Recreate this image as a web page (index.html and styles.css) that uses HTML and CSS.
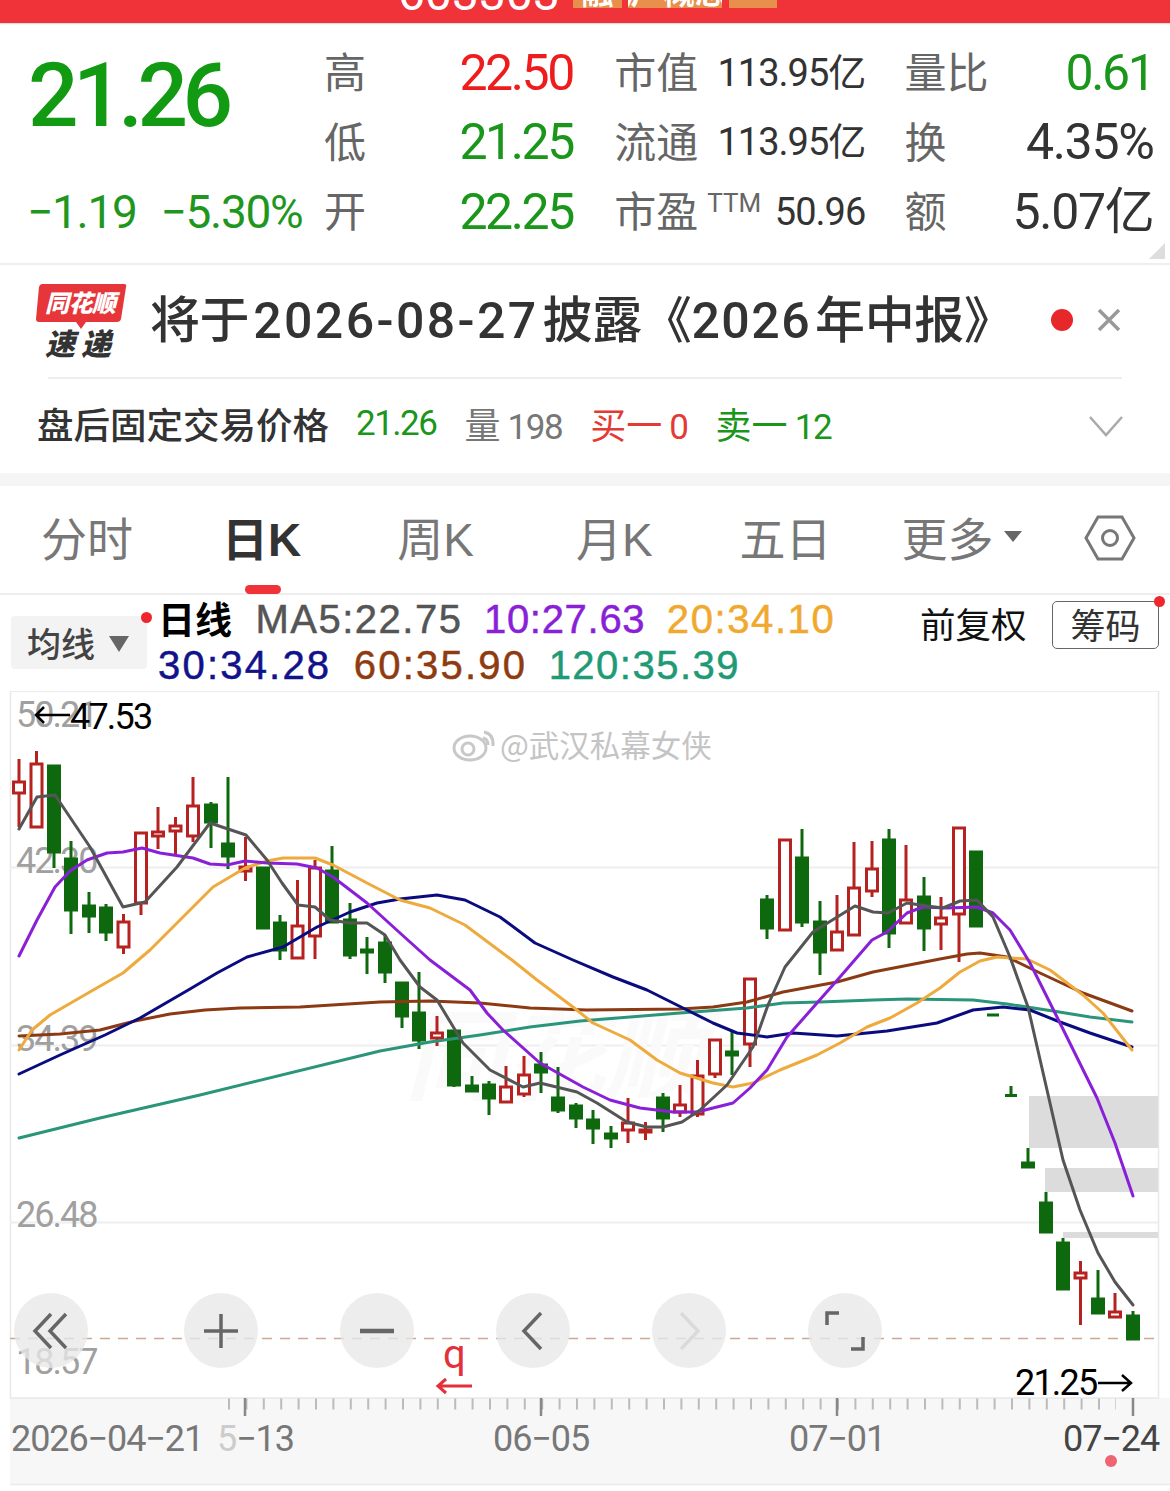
FILE: index.html
```html
<!DOCTYPE html>
<html lang="zh-CN">
<head>
<meta charset="utf-8">
<title>K线</title>
<link rel="stylesheet" href="styles.css">
</head>
<body>
<div class="page">
  <header class="topbar">
    <span class="code">603303</span>
    <span class="tag t1"><span>融</span></span>
    <span class="tag t2"><span>沪 概念</span></span>
    <span class="tag t3"></span>
  </header>

  <section class="quote">
    <div class="now">
      <div class="price din">21.26</div>
      <div class="change din"><span>−1.19</span><span>−5.30%</span></div>
    </div>
    <div class="stats">
      <div class="cell"><span class="lab one">高</span><span class="val big din red">22.50</span></div>
      <div class="cell"><span class="lab">市值</span><span class="val mid din">113.95亿</span></div>
      <div class="cell"><span class="lab">量比</span><span class="val big din green">0.61</span></div>
      <div class="cell"><span class="lab one">低</span><span class="val big din green">21.25</span></div>
      <div class="cell"><span class="lab">流通</span><span class="val mid din">113.95亿</span></div>
      <div class="cell"><span class="lab">换</span><span class="val big din dark">4.35%</span></div>
      <div class="cell"><span class="lab one">开</span><span class="val big din green">22.25</span></div>
      <div class="cell"><span class="lab">市盈<sup class="ttm">TTM</sup></span><span class="val mid din">50.96</span></div>
      <div class="cell"><span class="lab">额</span><span class="val big din dark">5.07亿</span></div>
    </div>
    <i class="corner"></i>
  </section>

  <section class="notice">
    <svg class="logo" width="92" height="78" viewBox="0 0 92 78">
      <path class="logo-bg" d="M6 1H88Q91 1 90 4L85 36Q84 39 81 39H50L45 46L40 39H3Q0 39 0 36L3 4Q4 1 6 1Z"/>
      <text class="logo-a" x="9" y="29">同花顺</text>
      <text class="logo-b" x="9" y="72">速递</text>
    </svg>
    <div class="notice-text">将于 <span class="num">2026-08-27</span> 披露《<span class="num short">2026</span> 年中报》</div>
    <i class="dot"></i>
    <svg class="close" width="26" height="26" viewBox="0 0 26 26"><path d="M3 3L23 23M23 3L3 23"/></svg>
  </section>

  <section class="after">
    <span class="after-title">盘后固定交易价格</span>
    <span class="din af green">21.26</span>
    <span class="din af gray"><b>量</b> 198</span>
    <span class="din af redsoft"><b>买一</b> 0</span>
    <span class="din af green"><b>卖一</b> 12</span>
    <svg class="chev" width="36" height="24" viewBox="0 0 36 24"><path d="M2 3L18 21L34 3"/></svg>
  </section>

  <div class="band"></div>

  <nav class="tabs">
    <span class="tab t-a">分时</span>
    <span class="tab t-b active">日K</span>
    <span class="tab t-c">周K</span>
    <span class="tab t-d">月K</span>
    <span class="tab t-e">五日</span>
    <span class="tab t-f">更多<i class="caret"></i></span>
    <svg class="hex" width="52" height="46" viewBox="0 0 52 46"><path d="M14 2H38L50 23L38 44H14L2 23Z"/><circle cx="26" cy="23" r="7.5"/></svg>
  </nav>

  <section class="legend">
    <div class="ma-btn">均线<i class="caret big-caret"></i><i class="reddot d1"></i></div>
    <div class="ma-lines">
      <div class="ma-row"><b class="ma-title">日线</b><span class="c5">MA5:22.75</span><span class="c10">10:27.63</span><span class="c20">20:34.10</span></div>
      <div class="ma-row"><span class="c30">30:34.28</span><span class="c60">60:35.90</span><span class="c120">120:35.39</span></div>
    </div>
    <div class="fq">前复权</div>
    <div class="chip">筹码<i class="reddot d2"></i></div>
  </section>

  <section class="chart">
    <svg class="kline" width="1170" height="800" viewBox="0 691 1170 800">
      <rect class="axisbg" x="10" y="1398" width="1160" height="86"/>
      <rect class="frame" x="10.5" y="691" width="1148" height="707"/>
      <path class="grid" d="M10 867.5H1158M10 1045.5H1158M10 1222.5H1158"/>
      <text class="wm" x="405" y="1092">同花顺</text>
      <rect class="gap" x="1029" y="1096" width="129" height="52"/>
      <rect class="gap" x="1045" y="1168" width="113" height="24"/>
      <rect class="gap" x="1063" y="1232" width="95" height="6"/>
      <path class="minor" d="M228 1404H1116"/>
      <path class="major" d="M245 1398V1416M541 1398V1416M837 1398V1416M1133 1398V1416"/>
      <path class="now-line" d="M10 1338.5H1158"/>
      <text class="yl" x="16" y="727">50.21</text>
      <text class="yl" x="16" y="873">42.30</text>
      <text class="yl" x="16" y="1051">34.39</text>
      <text class="yl" x="16" y="1227">26.48</text>
      <text class="yl" x="16" y="1374">18.57</text>

      <path class="up" d="M19 759V782M19 793V827M13.5 782h11V793h-11zM36.5 751V764M31 764h11V827h-11zM141 903V915M135.500 833h11V903h-11zM158 807V832M158 836V849M152.500 832h11V836h-11zM175.500 817V826M175.500 831V854M170 826h11V831h-11zM193 777V806M193 836V842M187.500 806h11V836h-11zM245.500 837V867M245.500 871V881M240 867h11V871h-11zM123.500 914V922M123.500 947V954M118 922h11V947h-11zM297.500 880V926M292 926h11V958h-11zM315 860V868M315 936V959M309.500 868h11V936h-11zM437 1016V1033M437 1038V1046M431.500 1033h11V1038h-11zM506 1066V1087M500.500 1087h11V1102h-11zM524 1056V1075M524 1094V1097M518.500 1075h11V1094h-11zM628 1098V1123M628 1130V1143M622.500 1123h11V1130h-11zM645.500 1122V1130M645.500 1132V1140M640 1130h11V1132h-11zM680 1085V1105M680 1112V1117M674.500 1105h11V1112h-11zM697.500 1060V1076M697.500 1114V1117M692 1076h11V1114h-11zM715 1074V1078M709.500 1040h11V1074h-11zM750 1044V1067M744.500 979h11V1044h-11zM779.500 840h11V930h-11zM837 895V932M831.500 932h11V950h-11zM854 842V888M848.500 888h11V935h-11zM872 841V869M872 891V897M866.500 869h11V891h-11zM906 845V900M900.500 900h11V923h-11zM941 897V918M941 924V950M935.500 918h11V924h-11zM959 914V962M953.500 828h11V914h-11zM1080.500 1261V1273M1080.500 1278V1325M1075 1273h11V1278h-11zM1115 1293V1312M1109.500 1312h11V1317h-11z"/>
      <path class="dn" d="M54 765V868M48.500 766h11V852h-11zM71 841V934M65.500 859h11V910h-11zM89 892V933M83.500 906h11V916h-11zM106 904V941M100.500 908h11V932h-11zM211 802V848M205.500 805h11V822h-11zM228 777V869M222.500 844h11V856h-11zM263 868V928M257.500 868h11V928h-11zM280 915V960M274.500 923h11V950h-11zM332 846V922M326.500 871h11V922h-11zM350 903V959M344.500 920h11V955h-11zM367 937V974M361.500 950h11V952h-11zM385 935V983M379.500 943h11V972h-11zM402 983V1028M396.500 983h11V1016h-11zM419 972V1049M413.500 1013h11V1040h-11zM454 1031V1087M448.500 1031h11V1085h-11zM472 1076V1091M466.500 1086h11V1091h-11zM489 1081V1115M483.500 1085h11V1098h-11zM541 1052V1093M535.500 1065h11V1072h-11zM558 1067V1113M552.500 1098h11V1110h-11zM576 1103V1128M570.500 1106h11V1118h-11zM593 1110V1144M587.500 1120h11V1128h-11zM611 1126V1148M605.500 1134h11V1138h-11zM663 1093V1132M657.500 1098h11V1118h-11zM732 1032V1075M726.500 1052h11V1055h-11zM767 895V939M761.500 900h11V928h-11zM802 829V927M796.500 858h11V922h-11zM820 901V975M814.500 922h11V952h-11zM889 829V948M883.500 840h11V933h-11zM924 877V951M918.500 897h11V928h-11zM976 852V926M970.500 852h11V926h-11zM987 1015h12M1011 1086V1096M1005 1095.500h12M1028 1148V1167M1022.500 1163h11V1167h-11zM1046 1192V1232M1040.500 1203h11V1232h-11zM1063 1238V1289M1057.500 1243h11V1289h-11zM1098 1270V1313M1092.500 1299h11V1313h-11zM1133 1311V1339M1127.500 1316h11V1339h-11z"/>

      <polyline class="ma m120" points="19,1138 100,1118 200,1095 380,1051 430,1042 480,1035 530,1027 580,1021 680,1013 747,1008 783,1003 820,1002 873,1000 907,999 973,1000 1007,1004 1053,1011 1090,1017 1132,1022"/>
      <polyline class="ma m60" points="19,1036 60,1034 100,1030 135,1021 170,1014 205,1010 240,1008 300,1007 380,1002 430,1001 480,1003 530,1008 587,1010 680,1009 713,1007 747,1002 783,992 837,982 873,972 940,959 967,954 980,953 1007,957 1040,973 1083,993 1132,1011"/>
      <polyline class="ma m30" points="19,1074 60,1055 105,1035 140,1018 190,989 217,973 247,957 283,947 317,927 350,912 377,903 400,899 437,895 465,900 500,917 535,943 573,960 613,977 647,990 687,1010 713,1023 737,1033 767,1037 793,1033 837,1036 887,1031 937,1023 973,1010 1003,1007 1030,1010 1060,1022 1090,1033 1132,1047"/>
      <polyline class="ma m20" points="19,1050 32,1030 50,1015 95,989 123,973 150,950 187,913 213,887 245,868 267,861 283,858 315,858 333,865 367,883 400,900 430,908 465,925 512,960 537,980 573,1007 593,1023 630,1040 657,1060 680,1073 713,1083 733,1087 753,1083 780,1070 817,1055 840,1043 867,1027 890,1018 917,1003 940,988 960,972 980,961 997,957 1027,959 1050,970 1083,995 1103,1013 1132,1050"/>
      <polyline class="ma m10" points="19,956 37,920 55,887 70,871 87,860 107,853 123,852 142,848 160,853 193,858 210,864 227,865 245,861 267,863 297,864 317,868 333,877 367,903 400,933 430,960 470,990 487,1013 503,1030 540,1063 583,1087 610,1100 640,1108 673,1112 697,1112 733,1103 750,1088 767,1070 787,1037 817,1003 840,977 872,940 887,932 907,913 923,907 947,908 977,907 993,913 1010,930 1030,963 1057,1017 1097,1098 1115,1143 1133,1196"/>
      <polyline class="ma m5" points="19,829 37,797 55,795 90,847 123,907 145,902 177,867 210,823 246,835 267,860 282,883 298,905 315,907 330,920 350,923 367,923 385,935 400,960 420,987 437,1000 463,1043 490,1070 523,1087 540,1083 577,1092 597,1103 627,1122 647,1127 663,1127 682,1122 700,1110 727,1085 753,1047 768,1005 785,967 813,932 855,906 873,912 888,913 907,903 927,906 943,908 960,901 977,900 993,917 1010,957 1028,1007 1047,1090 1063,1160 1080,1210 1098,1253 1115,1282 1133,1305"/>

      <path class="arrow" d="M36 715H70M44 707L36 715L44 723"/>
      <text class="pt" x="70" y="729">47.53</text>
      <text class="pt" x="1015" y="1395">21.25</text>
      <path class="arrow" d="M1098 1383H1131M1122 1375L1131 1383L1122 1391"/>
      <text class="q" x="443" y="1368">q</text>
      <path class="arrow-r" d="M438 1386H472M446 1379L438 1386L446 1393"/>

      <g class="weibo">
        <ellipse cx="470" cy="748" rx="16" ry="12"/>
        <circle cx="468" cy="749" r="6"/>
        <path d="M484 732Q494 734 493 746M483 738Q488 739 488 745"/>
      </g>
      <text class="wb" x="500" y="757">@武汉私幕女侠</text>

      <text class="xl" x="11" y="1451">2026−04−21</text>
      <text class="xl"><tspan class="fade" x="217" y="1451">5</tspan>−13</text>
      <text class="xl" x="493" y="1451">06−05</text>
      <text class="xl" x="789" y="1451">07−01</text>
      <text class="xl dk" x="1063" y="1451">07−24</text>
      <circle class="pager" cx="1111" cy="1461" r="6"/>
      <path class="endline" d="M10 1484.500H1170"/>
    </svg>

    <div class="btns">
      <button class="btn b1"><svg width="40" height="40" viewBox="0 0 40 40"><path d="M20 3L4 20L20 37M35 3L19 20L35 37"/></svg></button>
      <button class="btn b2"><svg width="36" height="36" viewBox="0 0 36 36"><path d="M1 18H35M18 1V35"/></svg></button>
      <button class="btn b3"><svg width="36" height="36" viewBox="0 0 36 36"><path class="thick" d="M1 18H35"/></svg></button>
      <button class="btn b3"><svg width="24" height="40" viewBox="0 0 24 40"><path d="M20 2L3 20L20 38"/></svg></button>
      <button class="btn b3 off"><svg width="24" height="40" viewBox="0 0 24 40"><path d="M4 2L21 20L4 38"/></svg></button>
      <button class="btn b3"><svg width="40" height="40" viewBox="0 0 40 40"><path d="M2 14V2H14M38 26V38H26"/></svg></button>
    </div>
  </section>
</div>
</body>
</html>
```
FILE: styles.css
```css
* { box-sizing: border-box; }
html, body { margin: 0; padding: 0; background: #fff; }
body { font-family: Roboto, "Noto Sans CJK SC", sans-serif; color: #333; }
.page { width: 1170px; height: 1491px; overflow: hidden; position: relative; }
i { font-style: normal; display: block; }

.din { font-family: Roboto, "Noto Sans CJK SC", sans-serif; letter-spacing: -2px; }
.red { color: #ee1c1c; }
.green { color: #1a961a; }
.dark { color: #333; }
.gray { color: #777; }
.redsoft { color: #e33a34; }

.topbar { height: 23px; background: #f03239; display: flex; align-items: flex-end; overflow: hidden; padding-left: 398px; box-shadow: 0 1px 1px #ddd; position: relative; }
.code { color: #fff; font-size: 48px; line-height: 34px; height: 28px; letter-spacing: 0; width: 175px; flex: none; transform: translateY(-18px); }
.tag { background: #e78f4b; height: 8px; margin-bottom: 15px; display: flex; align-items: flex-end; justify-content: center; overflow: hidden; font-size: 32px; line-height: 30px; color: #fff; font-weight: 700; white-space: nowrap; flex: none; }
.t1 { width: 49px; }
.t2 { width: 94px; margin-left: 6px; }
.t3 { width: 48px; margin-left: 7px; }

.quote { height: 242px; display: flex; padding: 15px 16px 0 30px; border-bottom: 2px solid #eee; position: relative; }
.now { width: 295px; flex: none; display: flex; flex-direction: column; }
.price { font-size: 89px; line-height: 106px; color: #129a12; font-weight: 500; letter-spacing: -5.500px; margin: 5px 0 0 -2px; }
.change { font-size: 46px; line-height: 54px; color: #1f971f; display: flex; gap: 24px; margin: 36px 0 0 -3px; letter-spacing: -1.300px; }
.stats { flex: 1; display: grid; grid-template-columns: 249px 249px 249px; column-gap: 41.250px; grid-auto-rows: 69.500px; margin-left: -1px; }
.cell { display: flex; justify-content: space-between; align-items: center; height: 69px; }
.lab { font-size: 42px; line-height: 70px; height: 70px; color: #666; white-space: nowrap; display: flex; margin-top: 3px; }
.val { white-space: nowrap; text-align: right; line-height: 60px; height: 60px; }
.big { font-size: 50px; letter-spacing: -2.400px; }
.mid { font-size: 38px; color: #333; letter-spacing: -1px; margin-right: -2px; }
.dark { letter-spacing: -1.300px; }
.ttm { font-size: 26px; line-height: 50px; color: #666; margin-left: 9px; letter-spacing: 0; }
.corner { position: absolute; right: 5px; bottom: 4px; width: 16px; height: 16px; background: #ddd; clip-path: polygon(100% 0, 100% 100%, 0 100%); }

.notice { height: 114px; display: flex; align-items: center; padding: 0 48px 4px 36px; position: relative; }
.notice::after { content: ""; position: absolute; left: 48px; right: 48px; bottom: 0; height: 2px; background: #eee; }
.logo { flex: none; overflow: visible; margin-top: 4px; }
.logo-bg { fill: #e6363a; }
.logo-a { font-size: 24px; font-weight: 900; font-style: italic; fill: #fff; font-family: "Noto Sans CJK SC", sans-serif; letter-spacing: -0.5px; }
.logo-b { font-size: 30px; font-weight: 900; font-style: italic; fill: #333; font-family: "Noto Sans CJK SC", sans-serif; letter-spacing: 6px; }
.notice-text { font-size: 50px; font-weight: 500; color: #333; margin: -9px 0 0 22px; flex: 1; white-space: nowrap; word-spacing: -8px; letter-spacing: -0.4px; }
.num { letter-spacing: 2.400px; }
.short { letter-spacing: 1.500px; }
.dot { width: 22px; height: 22px; border-radius: 50%; background: #e8272b; flex: none; margin-right: 23px; }
.close { flex: none; }
.close path { stroke: #999; stroke-width: 3.5; fill: none; }

.after { height: 94px; display: flex; align-items: center; padding: 0 46px 6px 37px; }
.after-title { font-size: 36.500px; font-weight: 500; color: #333; width: 319px; flex: none; white-space: nowrap; }
.af { font-size: 35px; margin-right: 28px; white-space: nowrap; letter-spacing: -1.500px; }
.af b { font-weight: 400; font-size: 36px; letter-spacing: 0; }
.chev { margin: 6px 0 0 auto; flex: none; }
.chev path { stroke: #aaa; stroke-width: 2.500; fill: none; }

.band { height: 13px; background: #f5f5f5; }

.tabs { height: 109px; border-bottom: 2px solid #eee; display: flex; align-items: center; position: relative; }
.tab { font-size: 46px; font-family: "Liberation Sans", "Noto Sans CJK SC", sans-serif; color: #777; white-space: nowrap; display: flex; align-items: center; flex: none; margin-top: -8px; }
.t-a { margin-left: 41px; }
.t-b { margin-left: 89px; }
.t-c { margin-left: 96px; }
.t-d { margin-left: 102px; }
.t-e { margin-left: 87px; }
.t-f { margin-left: 70px; }
.active { color: #333; font-weight: 700; position: relative; }
.active::after { content: ""; position: absolute; left: 23px; top: 82px; width: 36px; height: 9px; border-radius: 5px; background: #f03239; }
.caret { width: 0; height: 0; border-left: 9px solid transparent; border-right: 9px solid transparent; border-top: 11px solid #666; margin-left: 10px; margin-top: 2px; }
.hex { margin-left: 62px; flex: none; margin-top: -4px; }
.hex path, .hex circle { fill: none; stroke: #777; stroke-width: 3; }

.legend { height: 96px; position: relative; display: flex; }
.ma-btn { width: 136px; height: 53px; margin: 21px 0 0 11px; background: #f3f3f3; border-radius: 4px; font-size: 34px; color: #444; font-weight: 500; display: flex; align-items: center; padding-left: 16px; position: relative; flex: none; }
.big-caret { border-top-width: 16px; border-left-width: 10px; border-right-width: 10px; margin-left: 14px; }
.reddot { position: absolute; width: 11px; height: 11px; background: #f0262d; border-radius: 50%; }
.d1 { right: -5px; top: -4px; }
.d2 { right: -7px; top: -6px; }
.ma-lines { margin: 1px 0 0 11px; font-family: "Liberation Sans", "Noto Sans CJK SC", sans-serif; font-size: 40px; letter-spacing: 2.200px; width: 743px; flex: none; -webkit-text-stroke: 0.5px currentColor; }
.ma-row { display: flex; gap: 21.500px; height: 45px; align-items: center; white-space: nowrap; margin-top: 1px; }
.ma-title { color: #000; font-size: 37px; font-weight: 700; letter-spacing: 0; font-family: "Noto Sans CJK SC", sans-serif; -webkit-text-stroke: 0; margin: -4px 2px 0 0; }
.c5 { color: #555; letter-spacing: 1.500px; }
.c10 { color: #8a1fd8; letter-spacing: 0.700px; }
.c20 { color: #f0a92e; letter-spacing: 1.600px; }
.c30 { color: #12128a; }
.c60 { color: #8f3b10; margin-left: 1px; }
.c120 { color: #1f9a76; letter-spacing: 1.500px; }
.fq { font-size: 35.500px; color: #111; margin: 7px 0 0 19px; flex: none; width: 106px; white-space: nowrap; line-height: 48px; }
.chip { width: 107px; height: 48px; margin: 6px 0 0 26px; padding-bottom: 3px; border: 1.500px solid #666; border-radius: 5px; font-size: 35px; color: #333; display: flex; align-items: center; justify-content: center; position: relative; flex: none; }

.chart { position: relative; height: 800px; }
.kline { display: block; }
.axisbg { fill: #f7f7f7; }
.frame { fill: #fff; stroke: #e8e8e8; stroke-width: 1.500; }
.grid { stroke: #eee; stroke-width: 2; fill: none; }
.gap { fill: #dcdcdc; }
.wm { font-size: 100px; fill: #fafafa; font-style: italic; font-weight: 700; font-family: "Noto Sans CJK SC", sans-serif; }
.minor { stroke: #bbb; stroke-width: 11; stroke-dasharray: 2 15.4; fill: none; }
.major { stroke: #888; stroke-width: 2.500; fill: none; }
.now-line { stroke: #c9a894; stroke-width: 1.500; stroke-dasharray: 10 8; fill: none; }
.yl { font-size: 36px; fill: #a0a0a0; font-family: Roboto, sans-serif; letter-spacing: -2px; }
.up { fill: #fff; stroke: #b5221f; stroke-width: 3; }
.dn { fill: #0e690e; stroke: #0e690e; stroke-width: 3; }
.ma { fill: none; stroke-width: 3; stroke-linejoin: round; stroke-linecap: round; }
.m5 { stroke: #555; }
.m10 { stroke: #8a1fd8; }
.m20 { stroke: #eeaa3c; }
.m30 { stroke: #0b0b80; }
.m60 { stroke: #8c3a14; }
.m120 { stroke: #2a957a; }
.arrow { stroke: #000; stroke-width: 2.500; fill: none; }
.arrow-r { stroke: #e3303a; stroke-width: 3; fill: none; }
.pt { font-size: 36px; fill: #000; font-family: Roboto, sans-serif; letter-spacing: -1.800px; }
.q { font-size: 40px; fill: #e3303a; font-family: Roboto, sans-serif; }
.weibo ellipse, .weibo circle, .weibo path { fill: none; stroke: #c8c8c8; stroke-width: 3; }
.wb { font-size: 30.500px; fill: #c4c4c4; font-family: "Noto Sans CJK SC", sans-serif; }
.xl { font-size: 36px; fill: #777; font-family: Roboto, sans-serif; letter-spacing: -1.100px; }
.dk { fill: #444; }
.fade { fill: #ccc; }
.pager { fill: #ee6470; }
.endline { stroke: #eaeaea; stroke-width: 1.500; fill: none; }

.btns { position: absolute; left: 14px; top: 602px; display: flex; gap: 82px; }
.btn { width: 74px; height: 75px; border: 0; padding: 0; border-radius: 50%; background: rgba(232, 232, 232, 0.78); display: flex; align-items: center; justify-content: center; }
.b1 { margin-right: 14px; }
.btn svg { display: block; }
.btn path { fill: none; stroke: #666; stroke-width: 3.500; }
.btn .thick { stroke-width: 4.500; }
.off path { stroke: #dadada; }
```
